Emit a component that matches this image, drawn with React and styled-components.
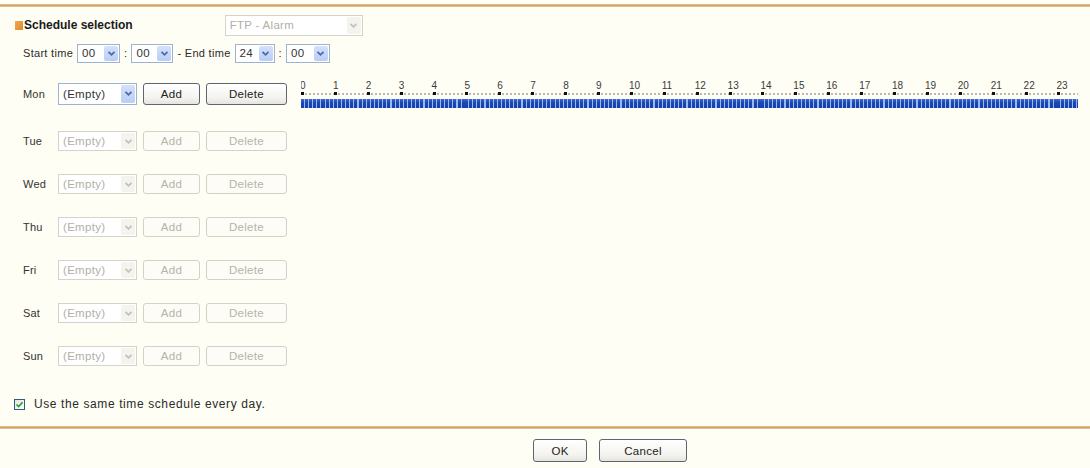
import React from "react";
import styled, { createGlobalStyle } from "styled-components";

const GlobalStyle = createGlobalStyle`
  html, body {
    margin: 0;
    padding: 0;
    background: #fffef4;
  }
  body {
    font-family: "Liberation Sans", Arial, sans-serif;
    font-size: 11px;
    color: #2a2a2a;
  }
`;

const Days = ["Mon", "Tue", "Wed", "Thu", "Fri", "Sat", "Sun"];
const Hours = Array.from({ length: 24 }, (_, i) => i);

const Chevron = ({ color }) => (
  <svg width="9" height="7" viewBox="0 0 9 7">
    <path d="M1.5 1.8 L4.5 4.8 L7.5 1.8" fill="none" stroke={color} strokeWidth="1.8" />
  </svg>
);

const CheckMark = () => (
  <svg width="9" height="9" viewBox="0 0 9 9">
    <path d="M1.5 4.5 L3.6 6.6 L7.6 2.2" fill="none" stroke="#2f9a2f" strokeWidth="1.6" />
  </svg>
);

const DropDown = ({ value, width, height, disabled }) => (
  <SelectBox $w={width} $h={height} $disabled={disabled}>
    <SelectValue $disabled={disabled}>{value}</SelectValue>
    <ArrowBox $disabled={disabled}>
      <Chevron color={disabled ? "#c4c2b6" : "#4d6aa8"} />
    </ArrowBox>
  </SelectBox>
);

const Timeline = () => (
  <TimelineBox>
    {Hours.map((h) => (
      <HourCell key={h}>
        <HourLabel>{h}</HourLabel>
        <Tick />
        <Bar />
      </HourCell>
    ))}
  </TimelineBox>
);

const App = () => {
  return (
    <Page>
      <GlobalStyle />
      <Rule $top={4} />
      <Header>
        <Marker />
        <Title>Schedule selection</Title>
        <HeaderSelect>
          <DropDown value="FTP - Alarm" width={138} height={21} disabled />
        </HeaderSelect>
      </Header>
      <TimeRow>
        <Text>Start time</Text>
        <DropDown value="00" width={43} height={19} />
        <Text>:</Text>
        <DropDown value="00" width={42} height={19} />
        <Text>- End time</Text>
        <DropDown value="24" width={40} height={19} />
        <Text>:</Text>
        <DropDown value="00" width={44} height={19} />
      </TimeRow>
      <DayList>
        {Days.map((d, i) => {
          const active = i === 0;
          return (
            <DayRow key={d} $first={active}>
              <DayLabel>{d}</DayLabel>
              <DropDown value="(Empty)" width={79} height={active ? 22 : 20} disabled={!active} />
              <Button $w={57} $h={active ? 22 : 20} disabled={!active}>
                Add
              </Button>
              <Button $w={81} $h={active ? 22 : 20} disabled={!active}>
                Delete
              </Button>
              {active && <Timeline />}
            </DayRow>
          );
        })}
      </DayList>
      <CheckRow>
        <CheckBox>
          <CheckMark />
        </CheckBox>
        <CheckText>Use the same time schedule every day.</CheckText>
      </CheckRow>
      <Rule $top={16} />
      <Footer>
        <Button $w={54} $h={23}>OK</Button>
        <Button $w={88} $h={23}>Cancel</Button>
      </Footer>
    </Page>
  );
};

const Page = styled.div`
  width: 1090px;
  height: 468px;
  display: flex;
  flex-direction: column;
  background: #fffef4;
  overflow: hidden;
`;
const Rule = styled.div`
  margin-top: ${(p) => p.$top}px;
  height: 3px;
  background: linear-gradient(#e6c596, #d2a466 50%, #e8cfa8);
  flex-shrink: 0;
`;
const Header = styled.div`
  margin-top: 7px;
  height: 22px;
  display: flex;
  align-items: center;
  padding-left: 15px;
`;
const Marker = styled.div`
  width: 8px;
  height: 9px;
  background: linear-gradient(135deg, #f0a850, #dd8a2c);
`;
const Title = styled.div`
  font-weight: bold;
  font-size: 12px;
  color: #1a1a1a;
  margin-left: 1px;
`;
const HeaderSelect = styled.div`
  margin-left: 92px;
`;
const TimeRow = styled.div`
  margin-top: 7px;
  height: 20px;
  display: flex;
  align-items: center;
  gap: 4px;
  padding-left: 23px;
`;
const Text = styled.span`
  letter-spacing: 0.3px;
  white-space: nowrap;
`;
const SelectBox = styled.div`
  width: ${(p) => p.$w}px;
  height: ${(p) => p.$h}px;
  box-sizing: border-box;
  display: flex;
  align-items: stretch;
  border: 1px solid ${(p) => (p.$disabled ? "#d6d4c8" : "#9fb3cf")};
  background: #ffffff;
  padding: 1px;
`;
const SelectValue = styled.div`
  flex: 1;
  display: flex;
  align-items: center;
  padding-left: 3px;
  font-size: 11.5px;
  letter-spacing: 0.3px;
  color: ${(p) => (p.$disabled ? "#b2b0a4" : "#333")};
  white-space: nowrap;
  overflow: hidden;
`;
const ArrowBox = styled.div`
  width: 14px;
  display: flex;
  align-items: center;
  justify-content: center;
  background: ${(p) =>
    p.$disabled ? "#f4f3ee" : "linear-gradient(#d4e1fb, #b9cdf6)"};
  border-radius: 2px;
`;
const DayList = styled.div`
  display: flex;
  flex-direction: column;
`;
const DayRow = styled.div`
  margin-top: ${(p) => (p.$first ? 17 : 23)}px;
  height: ${(p) => (p.$first ? 27 : 20)}px;
  display: flex;
  align-items: center;
  gap: 6px;
  padding-left: 23px;
  &:nth-child(2) {
    margin-top: 24px;
  }
`;
const DayLabel = styled.div`
  width: 29px;
  font-size: 11px;
  letter-spacing: 0.2px;
  color: #333;
`;
const Button = styled.button`
  width: ${(p) => p.$w}px;
  height: ${(p) => p.$h}px;
  box-sizing: border-box;
  padding: 0;
  font-family: "Liberation Sans", Arial, sans-serif;
  font-size: 11.5px;
  letter-spacing: 0.3px;
  color: #222;
  border: 1px solid #5b6672;
  border-radius: 3px;
  background: linear-gradient(#ffffff, #f4f3ee 70%, #e6e4dc);
  &:disabled {
    color: #b6b4a8;
    border-color: #d4d2c6;
    background: #fdfcf6;
  }
`;
const TimelineBox = styled.div`
  margin-left: 8px;
  width: 777px;
  height: 28px;
  display: flex;
  overflow: hidden;
`;
const HourCell = styled.div`
  width: 32.9px;
  flex-shrink: 0;
  display: flex;
  flex-direction: column;
`;
const HourLabel = styled.div`
  height: 11px;
  font-size: 10px;
  line-height: 11px;
  color: #3a3a3a;
  margin-left: -1px;
`;
const Tick = styled.div`
  position: relative;
  margin-top: 2px;
  height: 2px;
  background: repeating-linear-gradient(
    to right,
    #b8b8b8 0 2px,
    transparent 2px 4px
  );
  &::before {
    content: "";
    position: absolute;
    left: 0;
    top: -1px;
    width: 3px;
    height: 3px;
    background: #111;
  }
`;
const Bar = styled.div`
  margin-top: 4px;
  height: 9px;
  background: repeating-linear-gradient(
      to right,
      transparent 0 3px,
      #9cb8ee 3px 4.1px
    ),
    linear-gradient(#3a6ad0, #1a47b6 40%, #1540a8);
`;
const CheckRow = styled.div`
  margin-top: 32px;
  height: 12px;
  display: flex;
  align-items: center;
  padding-left: 14px;
  gap: 9px;
`;
const CheckBox = styled.div`
  width: 11px;
  height: 11px;
  box-sizing: border-box;
  border: 1px solid #2a5c86;
  background: linear-gradient(135deg, #e4e3dc, #ffffff);
  display: flex;
  align-items: center;
  justify-content: center;
`;
const CheckText = styled.div`
  font-size: 12px;
  letter-spacing: 0.6px;
  color: #2a2a2a;
`;
const Footer = styled.div`
  margin-top: 10px;
  display: flex;
  justify-content: center;
  gap: 12px;
  padding-left: 130px;
`;

export default App;
